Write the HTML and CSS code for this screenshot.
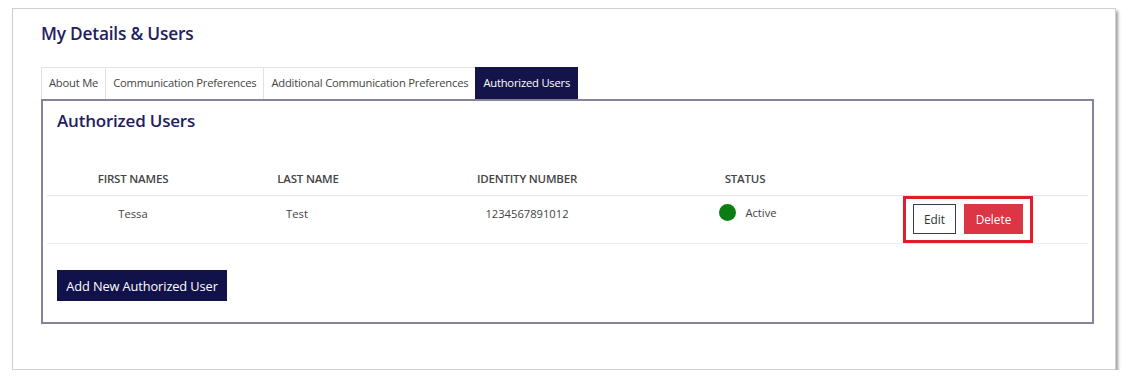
FILE: index.html
```html
<!DOCTYPE html>
<html>
<head>
<meta charset="utf-8">
<link rel="stylesheet" href="styles.css">
</head>
<body>
<div class="window">
  <h1 class="title">My Details &amp; Users</h1>
  <div class="tabs">
    <div class="tab">About Me</div>
    <div class="tab">Communication Preferences</div>
    <div class="tab">Additional Communication Preferences</div>
    <div class="tab active">Authorized Users</div>
  </div>
  <div class="panel">
    <h2 class="panel-title">Authorized Users</h2>
    <div class="table">
      <div class="row head">
        <div class="cell">FIRST NAMES</div>
        <div class="cell">LAST NAME</div>
        <div class="cell">IDENTITY NUMBER</div>
        <div class="cell">STATUS</div>
        <div class="cell"></div>
      </div>
      <div class="row body">
        <div class="cell">Tessa</div>
        <div class="cell c2">Test</div>
        <div class="cell">1234567891012</div>
        <div class="cell status"><span class="dot"></span>Active</div>
        <div class="cell actions">
          <div class="highlight">
            <button class="btn edit">Edit</button>
            <button class="btn delete">Delete</button>
          </div>
        </div>
      </div>
    </div>
    <button class="btn add">Add New Authorized User</button>
  </div>
</div>
</body>
</html>
```
FILE: styles.css
```css
* { box-sizing: border-box; }
html, body { margin: 0; padding: 0; background: #fff; }
body { font-family: "Open Sans", "Noto Sans", sans-serif; color: #444; }

.window {
  margin: 8px 0 0 12px;
  width: 1104px;
  height: 362px;
  background: #fff;
  border: 1px solid #d0d0d0;
  box-shadow: 2px 3px 3px rgba(0,0,0,0.4);
  padding: 13px 21px 0 28px;
}

.title {
  margin: 0;
  font-size: 17.3px;
  font-weight: 600;
  color: #1f2060;
  line-height: 24px;
  letter-spacing: -0.2px;
}

.tabs {
  display: flex;
  margin-top: 21px;
  height: 32px;
}
.tab {
  font-size: 11.2px;
  letter-spacing: -0.2px;
  color: #444;
  padding: 0 7px;
  line-height: 30px;
  border: 1px solid #e2e2e2;
  border-bottom: none;
  border-right: none;
  background: #fff;
}
.tab:last-child { border-right: 1px solid #e2e2e2; }
.tab.active {
  background: #14144a;
  color: #fff;
  border-color: #14144a;
}

.panel {
  border: 2px solid #85849a;
  height: 225px;
  padding: 8px 4px 0 4px;
}
.panel-title {
  margin: 0 0 0 10px;
  font-size: 17px;
  font-weight: 600;
  color: #1f2060;
  line-height: 24px;
  letter-spacing: -0.2px;
}

.table { margin-top: 38px; }
.row {
  display: grid;
  grid-template-columns: 172px 178px 260px 176px 1fr;
}
.row.head {
  height: 25px;
  border-bottom: 1px solid #e6e6e6;
  font-weight: 600;
  font-size: 11.5px;
  letter-spacing: -0.2px;
  color: #444;
  align-items: start;
}
.row.body {
  height: 48px;
  border-bottom: 1px solid #ececec;
  font-size: 11.2px;
  color: #444;
  align-items: start;
}
.cell { text-align: center; }
.row.body .cell { padding-top: 10px; }
.row.body .c2 { padding-right: 22px; }
.status {
  display: flex;
  justify-content: center;
  align-items: center;
  gap: 9px;
  padding-left: 6px;
}
.row.body .status { padding-top: 8px; }
.dot {
  width: 17px;
  height: 17px;
  border-radius: 50%;
  background: #0b7d12;
  display: inline-block;
}
.row.body .actions {
  padding-top: 0;
  display: flex;
  justify-content: flex-start;
  padding-left: 70px;
}
.highlight {
  border: 3px solid #e01e2a;
  padding: 5px 7px;
  display: flex;
  gap: 8px;
  height: 47px;
}

.btn {
  font-family: "Open Sans", "Noto Sans", sans-serif;
  font-size: 11.8px;
  border: none;
  cursor: pointer;
  padding: 0;
}
.edit {
  background: #fff;
  color: #333;
  border: 1px solid #3a3a5a;
  width: 43px;
  height: 30px;
}
.delete {
  background: #dc3545;
  color: #fff;
  width: 59px;
  height: 30px;
}
.add {
  margin: 26px 0 0 10px;
  background: #12124a;
  color: #fff;
  height: 31px;
  width: 170px;
  padding: 0;
  font-size: 12.8px;
  letter-spacing: -0.1px;
}
```
